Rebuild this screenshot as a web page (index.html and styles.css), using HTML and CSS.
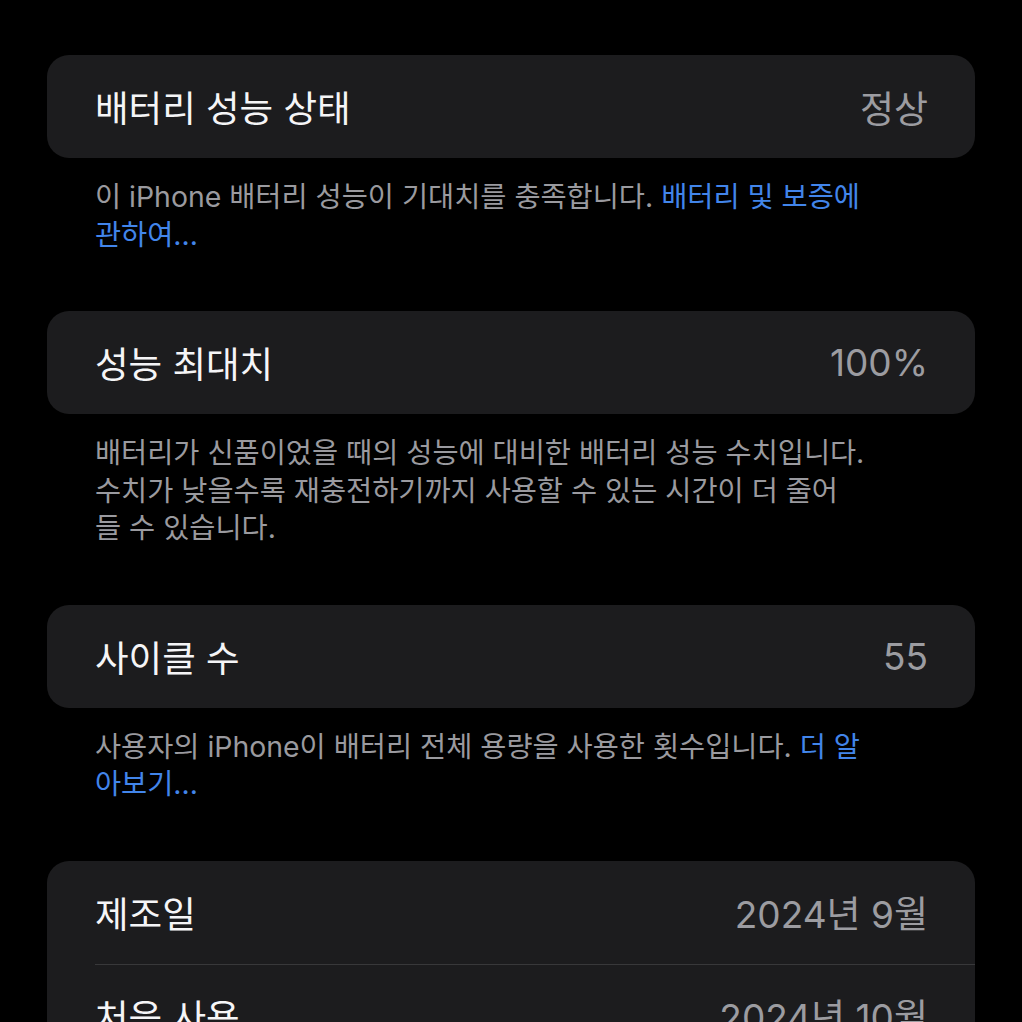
FILE: index.html
```html
<!DOCTYPE html>
<html lang="ko">
<head>
  <meta charset="UTF-8">
  <title>배터리 성능 상태</title>
  <meta name="viewport" content="width=device-width, initial-scale=1">
  <link rel="stylesheet" href="styles.css">
</head>
<body>

  <div class="page">

    <section class="group">
      <div class="card">
        <div class="row">
          <span class="label">배터리 성능 상태</span>
          <span class="value">정상</span>
        </div>
      </div>
      <p class="footer">이 iPhone 배터리 성능이 기대치를 충족합니다. <a href="#">배터리 및 보증에<br>관하여...</a></p>
    </section>

    <section class="group">
      <div class="card">
        <div class="row">
          <span class="label">성능 최대치</span>
          <span class="value">100%</span>
        </div>
      </div>
      <p class="footer">배터리가 신품이었을 때의 성능에 대비한 배터리 성능 수치입니다.<br>수치가 낮을수록 재충전하기까지 사용할 수 있는 시간이 더 줄어<br>들 수 있습니다.</p>
    </section>

    <section class="group">
      <div class="card">
        <div class="row">
          <span class="label">사이클 수</span>
          <span class="value">55</span>
        </div>
      </div>
      <p class="footer">사용자의 iPhone이 배터리 전체 용량을 사용한 횟수입니다. <a href="#">더 알<br>아보기...</a></p>
    </section>

    <section class="group">
      <div class="card">
        <div class="row">
          <span class="label">제조일</span>
          <span class="value">2024년 9월</span>
        </div>
        <div class="row">
          <span class="label">처음 사용</span>
          <span class="value">2024년 10월</span>
        </div>
      </div>
    </section>

  </div>

</body>
</html>
```

FILE: styles.css
```css
/* General Styles */
html, body {
  margin: 0;
  padding: 0;
  background-color: #000;
}

body {
  font-family: Inter, "Noto Sans CJK KR", sans-serif;
  color: #fff;
}

.page {
  padding: 55px 47px 0;
}

.group {
  margin-bottom: 58px;
}

.card {
  background-color: #1c1c1e;
  border-radius: 22px;
  overflow: hidden;
}

.row {
  display: flex;
  align-items: center;
  justify-content: space-between;
  height: 103px;
  padding: 0 47px 0 48px;
}

.row + .row {
  position: relative;
}

/* inset divider between rows */
.row + .row::before {
  content: "";
  position: absolute;
  top: 0;
  left: 48px;
  right: 0;
  height: 1px;
  background-color: #38383a;
}

.label {
  font-size: 36.5px;
  color: #f5f5f7;
}

.value {
  font-size: 37px;
  color: #9c9ca1;
}

.footer {
  margin: 20px 0 0;
  padding: 0 48px;
  font-size: 28.4px;
  line-height: 37.5px;
  color: #9a9a9f;
  white-space: nowrap;
}

.footer a {
  color: #4285ea;
  text-decoration: none;
}
```
